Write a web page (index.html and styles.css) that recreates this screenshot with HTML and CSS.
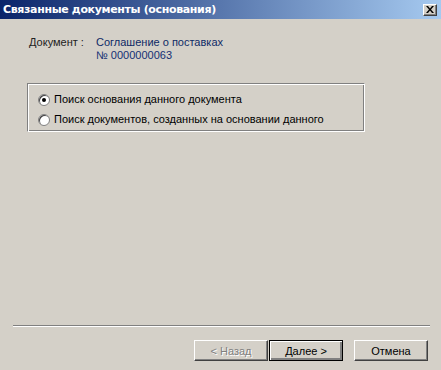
FILE: index.html
```html
<!DOCTYPE html>
<html>
<head>
<meta charset="utf-8">
<link rel="stylesheet" href="styles.css">
</head>
<body>
<div class="window">
  <div class="titlebar">
    <span class="title">Связанные документы (основания)</span>
    <span class="close"><svg width="8" height="7" viewBox="0 0 8 7"><path d="M0 0h2l2 2.5L6 0h2L5 3.5 8 7H6L4 4.5 2 7H0l3-3.5z" fill="#000"/></svg></span>
  </div>
  <div class="content">
    <div class="docrow">
      <span class="label">Документ :</span>
      <div class="docval">
        <div>Соглашение о поставках</div>
        <div class="num">№ 0000000063</div>
      </div>
    </div>
    <div class="group">
      <label class="opt"><span class="radio checked"></span>Поиск основания данного документа</label>
      <label class="opt"><span class="radio"></span>Поиск документов, созданных на основании данного</label>
    </div>
    <div class="spacer"></div>
    <div class="sep"></div>
    <div class="buttons">
      <span class="btn disabled">&lt; Назад</span>
      <span class="btn default">Далее &gt;</span>
      <span class="btn cancel">Отмена</span>
    </div>
  </div>
</div>
</body>
</html>
```
FILE: styles.css
```css
html, body { margin: 0; padding: 0; }
body {
  width: 441px; height: 370px; overflow: hidden;
  background: #d4d0c8;
  font-family: "Liberation Sans", Arial, sans-serif;
  font-size: 11px; color: #000;
}
.window { display: flex; flex-direction: column; height: 370px; }
.titlebar {
  height: 19px; flex: none;
  background: linear-gradient(to right, #0a246a 0%, #a6caf0 100%);
  display: flex; align-items: center; justify-content: space-between;
  padding: 0 4px 0 3px;
}
.title { color: #fff; font-family: "DejaVu Sans", sans-serif; font-weight: bold; font-size: 11px; letter-spacing: -0.35px; }
.close {
  width: 14px; height: 12px; box-sizing: border-box;
  background: #d4d0c8;
  border: 1px solid; border-color: #fff #404040 #404040 #fff;
  box-shadow: inset -1px -1px 0 #808080;
  display: flex; align-items: center; justify-content: center;
}
.content { flex: 1; display: flex; flex-direction: column; padding: 17px 11px 9px 13px; }
.docrow { display: flex; padding-left: 16px; line-height: 13px; }
.label { width: 67px; color: #222; }
.docval { color: #0e2a66; }
.num { color: #132f74; }
.group {
  margin: 21px 0 0 14px; width: 338px; height: 49px; box-sizing: border-box;
  border: 1px solid; border-color: #808080 #fff #fff #808080;
  box-shadow: inset 1px 1px 0 #fff, inset -1px -1px 0 #808080;
  padding: 9px 0 0 10px;
  display: flex; flex-direction: column; gap: 7px;
}
.opt { display: flex; align-items: center; gap: 4px; line-height: 13px; }
.radio {
  width: 12px; height: 12px; border-radius: 50%; box-sizing: border-box;
  background: #fff; border: 1px solid #808080;
  box-shadow: inset 1px 1px 0 #404040;
  display: inline-flex; align-items: center; justify-content: center;
}
.radio.checked::after { content: ""; width: 4px; height: 4px; border-radius: 50%; background: #000; }
.spacer { flex: 1; }
.sep { height: 0; border-top: 1px solid #808080; border-bottom: 1px solid #fff; width: 417px; }
.buttons { display: flex; justify-content: flex-end; margin-top: 13px; padding-right: 2px; }
.btn {
  width: 74px; height: 21px; box-sizing: border-box;
  display: flex; align-items: center; justify-content: center;
  border: 1px solid; border-color: #fff #404040 #404040 #fff;
  box-shadow: inset -1px -1px 0 #808080;
}
.btn.disabled { color: #808080; text-shadow: 1px 1px 0 #fff; }
.btn.default { border: 1px solid #000; box-shadow: inset 1px 1px 0 #fff, inset -2px -2px 0 #808080; margin-left: 1px; }
.btn.cancel { margin-left: 11px; }
```
